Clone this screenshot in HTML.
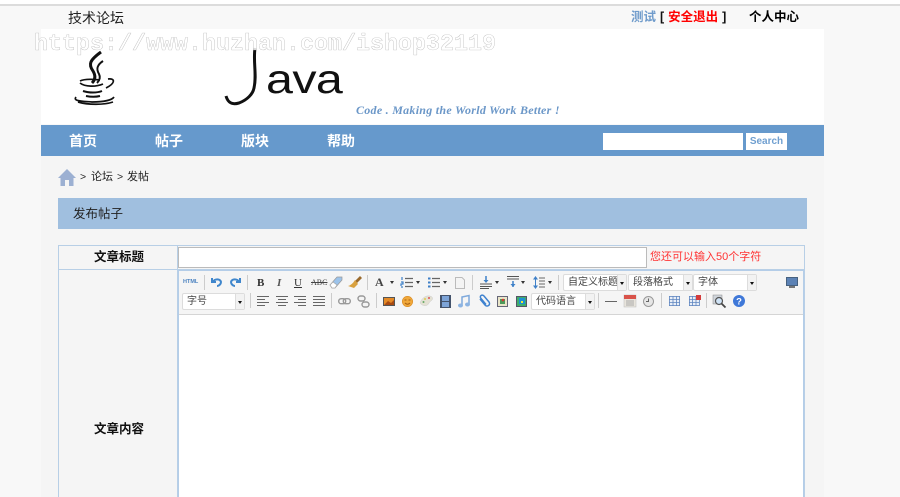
<!DOCTYPE html>
<html lang="zh-CN"><head><meta charset="utf-8"><title>发布帖子</title>
<style>
html,body{margin:0;padding:0;width:900px;height:497px;overflow:hidden;background:#f8f8f8}
body{font-family:"Liberation Sans","Noto Sans CJK SC",sans-serif;color:#111}
#w{position:absolute;left:0;top:0;width:900px;height:497px;filter:blur(.3px)}
.a{position:absolute;white-space:nowrap}
.sel{position:absolute;height:15px;background:#fff;border:1px solid #dcdcdc;border-radius:2px;box-sizing:content-box;font-size:10px;line-height:16px;color:#444;padding-left:4px;white-space:nowrap}
.sel:after{content:"";position:absolute;right:0;top:0;width:8px;height:15px;background:#f2f2f2;border-left:1px solid #ddd}
.sel:before{content:"";position:absolute;right:2px;top:7px;border:2.5px solid transparent;border-top:3px solid #111;border-bottom:0;z-index:1}
.sep{position:absolute;width:1px;height:15px;background:#ccc}
.dd{position:absolute;width:0;height:0;border:2.5px solid transparent;border-top:3px solid #333;border-bottom:0}
svg.i{position:absolute;overflow:visible}
</style></head><body><div id="w">
<div class="a" style="left:0;top:0;width:900px;height:4px;background:#fff"></div>
<div class="a" style="left:0;top:4px;width:900px;height:2px;background:#dcdcdc"></div>
<div class="a" style="left:41px;top:156px;width:783px;height:341px;background:#f5f5f5"></div>
<div class="a" style="left:68px;top:9px;font-size:14px;line-height:18px;color:#222">技术论坛</div>
<div class="a" style="left:631px;top:9px;font-size:12.500px;line-height:17px;font-weight:700;color:#111;word-spacing:.5px"><span style="color:#6f9bcb">测试</span> [ <span style="color:#f00">安全退出</span> ]</div>
<div class="a" style="left:749px;top:9px;font-size:12.500px;line-height:17px;font-weight:700;color:#000">个人中心</div>

<div class="a" style="left:41px;top:29px;width:783px;height:95px;background:#fff"></div>
<svg class="i" style="left:72px;top:50px" width="50" height="56" viewBox="0 0 50 56" fill="none" stroke="#111">
<path d="M29 2C18 10 16 14 21 21C24 26 23 30 20 33" stroke-width="3"/>
<path d="M31 11C25 15 24 19 27 24C29 28 27 31 25 33" stroke-width="2"/>
<path d="M8 31C12 29 20 29 28 30M8 33C13 37 24 37 31 34M36 29C43 28 44 33 34 38" stroke-width="1.700"/>
<path d="M11 41C17 43 25 43 30 41M14 46C19 47 24 47 28 46" stroke-width="2"/>
<path d="M4 47C1 51 8 51 20 52C32 52 40 50 42 47M6 52C16 55 32 55 41 52" stroke-width="1.700"/>
</svg>
<svg class="i" style="left:222px;top:47px" width="44" height="62" viewBox="0 0 44 62" fill="none" stroke="#111">
<path d="M33 1C31 15 35 28 32 41C31 47 25 53 17 56C10 58 6 56 4 49" stroke-width="3"/>
</svg>
<div class="a" style="left:266px;top:54px;font-family:'Liberation Sans',sans-serif;font-size:41px;line-height:50px;color:#111;transform:scaleX(1.18);transform-origin:left;letter-spacing:-.5px">ava</div>
<div class="a" style="left:356px;top:102px;font-family:'Liberation Serif',serif;font-style:italic;font-weight:700;font-size:12px;line-height:16px;color:#6b97c8;letter-spacing:.27px">Code . Making the World Work Better !</div>
<div class="a" style="left:34px;top:30px;font-family:'Liberation Mono',monospace;font-weight:700;font-size:23.330px;line-height:30px;color:rgba(255,255,255,.85);-webkit-text-stroke:.35px #b4b4b4">https://www.huzhan.com/ishop32119</div>

<div class="a" style="left:41px;top:125px;width:783px;height:31px;background:#6699cc"></div>
<div class="a" style="left:69px;top:131px;font-size:14px;line-height:20px;font-weight:700;color:#fff">首页</div>
<div class="a" style="left:155px;top:131px;font-size:14px;line-height:20px;font-weight:700;color:#fff">帖子</div>
<div class="a" style="left:241px;top:131px;font-size:14px;line-height:20px;font-weight:700;color:#fff">版块</div>
<div class="a" style="left:327px;top:131px;font-size:14px;line-height:20px;font-weight:700;color:#fff">帮助</div>
<div class="a" style="left:603px;top:133px;width:140px;height:17px;background:#fff"></div>
<div class="a" style="left:746px;top:133px;width:41px;height:17px;background:#fff;color:#6f9fd0;font-size:10px;font-weight:700;line-height:17px;text-align:center">Search</div>

<svg class="i" style="left:58px;top:169px" width="18" height="17" viewBox="0 0 18 17"><path d="M9 0L18 9H15.500V17H11V11H7V17H2.500V9H0Z" fill="#9cb0d2"/></svg>
<div class="a" style="left:80px;top:169px;font-size:10.500px;line-height:16px;color:#222">&gt;</div>
<div class="a" style="left:91px;top:169px;font-size:11px;line-height:16px;color:#222">论坛</div>
<div class="a" style="left:117px;top:169px;font-size:10.500px;line-height:16px;color:#222">&gt;</div>
<div class="a" style="left:127px;top:169px;font-size:11px;line-height:16px;color:#222">发帖</div>
<div class="a" style="left:58px;top:198px;width:749px;height:31px;background:#a0bfdf"></div>
<div class="a" style="left:73px;top:205px;font-size:12.500px;line-height:18px;color:#222">发布帖子</div>

<div class="a" style="left:58px;top:245px;width:747px;height:252px;border:1px solid #b8cfe6;border-bottom:0;box-sizing:border-box"></div>
<div class="a" style="left:58px;top:269px;width:747px;height:1px;background:#b8cfe6"></div>
<div class="a" style="left:177px;top:245px;width:1px;height:252px;background:#b8cfe6"></div>
<div class="a" style="left:59px;top:248px;width:120px;text-align:center;font-size:12.500px;line-height:18px;font-weight:700;color:#111">文章标题</div>
<div class="a" style="left:59px;top:420px;width:120px;text-align:center;font-size:12.500px;line-height:18px;font-weight:700;color:#111">文章内容</div>
<div class="a" style="left:178px;top:247px;width:469px;height:21px;background:#fff;border:1px solid #bbb;box-sizing:border-box"></div>
<div class="a" style="left:650px;top:250px;font-size:11px;line-height:15px;color:#f33">您还可以输入50个字符</div>

<div class="a" style="left:178px;top:270px;width:626px;height:227px;background:#fff;border:1px solid #b4cde8;border-bottom:0;box-sizing:border-box"></div>
<div class="a" style="left:179px;top:271px;width:624px;height:43px;background:#f5f5f5;border-bottom:1px solid #d5d5d5"></div>

<!-- row 1 -->
<div class="a" style="left:183px;top:278px;font-size:5.500px;line-height:9px;font-weight:700;color:#4b82c0">HTML</div>
<div class="sep" style="left:204px;top:275px"></div>
<svg class="i" style="left:211px;top:277px" width="11" height="10" viewBox="0 0 11 10" fill="none"><path d="M1 1V5H5M1.500 5C4 1.500 9 1.500 10 5C10 7 8 9 6 9" stroke="#3f86cc" stroke-width="2"/></svg>
<svg class="i" style="left:230px;top:277px" width="11" height="10" viewBox="0 0 11 10" fill="none"><path d="M10 1V5H6M9.500 5C7 1.500 2 1.500 1 5C1 7 3 9 5 9" stroke="#3f86cc" stroke-width="2"/></svg>
<div class="sep" style="left:247px;top:275px"></div>
<div class="a" style="left:257px;top:276px;font:700 11px/14px 'Liberation Serif',serif;color:#333">B</div>
<div class="a" style="left:277px;top:276px;font:italic 700 11px/14px 'Liberation Serif',serif;color:#555">I</div>
<div class="a" style="left:294px;top:276px;font:11px/14px 'Liberation Serif',serif;color:#333;text-decoration:underline">U</div>
<div class="a" style="left:311px;top:278px;font:8px/10px 'Liberation Serif',serif;color:#444;text-decoration:line-through">ABC</div>
<svg class="i" style="left:329px;top:276px" width="14" height="13" viewBox="0 0 14 13"><path d="M1 9L8 1H13V4L6 12H3Z" fill="#9cc3ea" stroke="#999" stroke-width=".7"/><path d="M1 9L4 6L8 9L6 12H3Z" fill="#fff" stroke="#aaa" stroke-width=".7"/></svg>
<svg class="i" style="left:348px;top:276px" width="14" height="13" viewBox="0 0 14 13"><path d="M7 5L12 0L14 2L9 7Z" fill="#9a6a2c"/><path d="M7 4L10 8L6 12L0 10Q4 9 7 4Z" fill="#d9a13f"/></svg>
<div class="sep" style="left:367px;top:275px"></div>
<div class="a" style="left:375px;top:275px;font:700 12px/15px 'Liberation Serif',serif;color:#444">A</div><div class="dd" style="left:390px;top:281px"></div>
<svg class="i" style="left:401px;top:277px" width="12" height="11" viewBox="0 0 12 11" fill="none"><path d="M4 1.500H12M4 5.500H12M4 9.500H12" stroke="#666" stroke-width="1.200"/><path d="M1 0V3M0 5H2V7H0V9M0 10H2" stroke="#3e80c8" stroke-width="1.200"/></svg><div class="dd" style="left:416px;top:281px"></div>
<svg class="i" style="left:428px;top:277px" width="12" height="11" viewBox="0 0 12 11" fill="none"><path d="M4 1.500H12M4 5.500H12M4 9.500H12" stroke="#666" stroke-width="1.200"/><path d="M0 1.500H2.500M0 5.500H2.500M0 9.500H2.500" stroke="#3e80c8" stroke-width="2"/></svg><div class="dd" style="left:443px;top:281px"></div>
<svg class="i" style="left:455px;top:277px" width="10" height="12" viewBox="0 0 10 12"><path d="M.5.500H7L9.500 3V11.500H.5Z" fill="#f4f4f4" stroke="#bbb"/></svg>
<div class="sep" style="left:472px;top:275px"></div>
<svg class="i" style="left:480px;top:276px" width="13" height="13" viewBox="0 0 13 13" fill="none"><path d="M0 8H12M0 10.500H12M0 12.500H9" stroke="#555"/><path d="M6 0V6" stroke="#3e80c8" stroke-width="1.500"/><path d="M3.500 4H8.500L6 7Z" fill="#3e80c8"/></svg><div class="dd" style="left:495px;top:281px"></div>
<svg class="i" style="left:507px;top:276px" width="12" height="12" viewBox="0 0 12 12" fill="none"><path d="M0 .5H12M0 3H12" stroke="#555"/><path d="M6 5V11" stroke="#3e80c8" stroke-width="1.500"/><path d="M3.500 8H8.500L6 11Z" fill="#3e80c8"/></svg><div class="dd" style="left:521px;top:281px"></div>
<svg class="i" style="left:533px;top:276px" width="12" height="13" viewBox="0 0 12 13" fill="none"><path d="M6 2H12M6 5H12M6 8H12M6 11H12" stroke="#666"/><path d="M2.500 1V12" stroke="#3e80c8"/><path d="M0 3.500L2.500 0L5 3.500ZM0 9.500H5L2.500 13Z" fill="#3e80c8"/></svg><div class="dd" style="left:548px;top:281px"></div>
<div class="sep" style="left:558px;top:275px"></div>
<div class="sel" style="left:563px;top:274px;width:58px">自定义标题</div>
<div class="sel" style="left:628px;top:274px;width:59px">段落格式</div>
<div class="sel" style="left:693px;top:274px;width:58px">字体</div>
<svg class="i" style="left:786px;top:277px" width="12" height="11" viewBox="0 0 12 11"><rect x=".5" y=".5" width="11" height="8" fill="#5c82b5" stroke="#47617f"/><rect x="3" y="9" width="6" height="2" fill="#777"/></svg>

<!-- row 2 -->
<div class="sel" style="left:182px;top:293px;width:57px">字号</div>
<div class="sep" style="left:250px;top:293px"></div>
<svg class="i" style="left:257px;top:296px" width="12" height="10" viewBox="0 0 12 10" fill="none" stroke="#666"><path d="M0 .5H12M0 3.500H8M0 6.500H12M0 9.500H8"/></svg>
<svg class="i" style="left:276px;top:296px" width="12" height="10" viewBox="0 0 12 10" fill="none" stroke="#666"><path d="M0 .5H12M2 3.500H10M0 6.500H12M2 9.500H10"/></svg>
<svg class="i" style="left:294px;top:296px" width="12" height="10" viewBox="0 0 12 10" fill="none" stroke="#666"><path d="M0 .5H12M4 3.500H12M0 6.500H12M4 9.500H12"/></svg>
<svg class="i" style="left:313px;top:296px" width="12" height="10" viewBox="0 0 12 10" fill="none" stroke="#666"><path d="M0 .5H12M0 3.500H12M0 6.500H12M0 9.500H12"/></svg>
<div class="sep" style="left:331px;top:293px"></div>
<svg class="i" style="left:338px;top:298px" width="13" height="7" viewBox="0 0 13 7" fill="none" stroke="#999" stroke-width="1.400"><rect x=".7" y=".7" width="7" height="5" rx="2.500"/><rect x="5.300" y=".7" width="7" height="5" rx="2.500"/></svg>
<svg class="i" style="left:357px;top:295px" width="13" height="13" viewBox="0 0 13 13" fill="none" stroke="#999" stroke-width="1.400"><rect x="1" y="1" width="7" height="5" rx="2.500"/><rect x="5" y="7" width="7" height="5" rx="2.500"/></svg>
<div class="sep" style="left:376px;top:293px"></div>
<svg class="i" style="left:383px;top:297px" width="12" height="9" viewBox="0 0 12 9"><rect width="12" height="9" fill="#555"/><rect x="1" y="1" width="10" height="7" fill="#e58a26"/><path d="M1 8L5 4L8 6L11 3V8Z" fill="#a84a12"/></svg>
<svg class="i" style="left:402px;top:296px" width="11" height="11" viewBox="0 0 11 11"><circle cx="5.500" cy="5.500" r="5.200" fill="#f0a83a" stroke="#d98a20" stroke-width=".6"/><path d="M2.500 4H4.500M6.500 4H8.500M3 7Q5.500 9.500 8 7" stroke="#a85f10" fill="none"/></svg>
<svg class="i" style="left:420px;top:295px" width="13" height="12" viewBox="0 0 13 12"><path d="M0 8C2 2 8-1 12 2C14 5 10 6 9 8C8 11 3 12 0 8Z" fill="#e4e1d3" stroke="#ccc" stroke-width=".5"/><circle cx="9" cy="3" r="1" fill="#d55"/><circle cx="5" cy="4" r="1" fill="#dc5"/><circle cx="3.500" cy="7" r="1" fill="#6a6"/></svg>
<svg class="i" style="left:440px;top:295px" width="11" height="13" viewBox="0 0 11 13"><rect width="11" height="13" fill="#44536b"/><rect x="2" y="1" width="7" height="5" fill="#7da4d8"/><rect x="2" y="7" width="7" height="5" fill="#7da4d8"/></svg>
<svg class="i" style="left:458px;top:295px" width="12" height="13" viewBox="0 0 12 13" fill="none"><path d="M4 10V2L11 .5V9" stroke="#7ea9dc" stroke-width="1.500"/><ellipse cx="2.500" cy="10.500" rx="2.500" ry="2" fill="#8db4e2"/><ellipse cx="9.500" cy="9.500" rx="2.500" ry="2" fill="#8db4e2"/></svg>
<svg class="i" style="left:478px;top:294px" width="13" height="14" viewBox="0 0 13 14" fill="none"><path d="M2 5L7 11C9 13.500 13 11 11 8L6 2C4 0 1 2 3 4.500L8 10.500" stroke="#3f82cf" stroke-width="1.500"/></svg>
<svg class="i" style="left:497px;top:296px" width="11" height="11" viewBox="0 0 11 11"><rect x=".5" y=".5" width="10" height="10" fill="#e9e5c8" stroke="#667"/><rect x="3" y="3" width="5" height="5" fill="#4d9a5a"/><circle cx="6" cy="4" r="1.300" fill="#d33"/></svg>
<svg class="i" style="left:516px;top:296px" width="11" height="11" viewBox="0 0 11 11"><rect x=".5" y=".5" width="10" height="10" fill="#3fae6c" stroke="#556"/><rect x="3" y="2" width="6" height="6" fill="#1e90d5"/><rect x="5" y="5" width="2" height="2" fill="#ee3"/></svg>
<div class="sel" style="left:531px;top:293px;width:58px">代码语言</div>
<div class="sep" style="left:598px;top:293px"></div>
<div class="a" style="left:605px;top:301px;width:12px;height:1px;background:#666"></div>
<svg class="i" style="left:624px;top:295px" width="12" height="12" viewBox="0 0 12 12"><rect width="12" height="12" fill="#e8e4dc" stroke="#bbb" stroke-width=".5"/><rect width="12" height="4" fill="#d9534a"/><path d="M2 6H10M2 8H10M2 10H10" stroke="#aaa"/></svg>
<svg class="i" style="left:643px;top:296px" width="11" height="11" viewBox="0 0 11 11" fill="none"><circle cx="5.500" cy="5.500" r="5" fill="#e6e6e6" stroke="#999"/><path d="M5.500 2.500V5.500H3" stroke="#666"/></svg>
<div class="sep" style="left:661px;top:293px"></div>
<svg class="i" style="left:669px;top:296px" width="11" height="10" viewBox="0 0 11 10" fill="#e8eef7" stroke="#5f86c0" stroke-width=".8"><rect x=".4" y=".4" width="10.200" height="9.200"/><path d="M.4 3.500H10.600M.4 6.500H10.600M4 .4V9.600M7.500 .4V9.600" fill="none"/></svg>
<svg class="i" style="left:689px;top:295px" width="12" height="11" viewBox="0 0 12 11" fill="#e8eef7" stroke="#5f86c0" stroke-width=".8"><rect x=".4" y="1.400" width="10" height="9.200"/><path d="M.4 4.500H10.400M.4 7.500H10.400M3.500 1.400V10.600M7 1.400V10.600" fill="none"/><rect x="7" y="0" width="5" height="5" fill="#d43c3c" stroke="none"/></svg>
<div class="sep" style="left:706px;top:293px"></div>
<svg class="i" style="left:713px;top:295px" width="13" height="13" viewBox="0 0 13 13" fill="none"><rect x="0" y="0" width="9" height="9" fill="#cfd4da" stroke="#888" stroke-width=".5"/><circle cx="6" cy="6" r="3.500" fill="#cfe3f6" stroke="#555" stroke-width="1.200"/><path d="M8.500 8.500L12.500 12.500" stroke="#444" stroke-width="1.800"/></svg>
<svg class="i" style="left:733px;top:295px" width="12" height="12" viewBox="0 0 12 12"><circle cx="6" cy="6" r="6" fill="#3f78d8"/><text x="6" y="9.500" text-anchor="middle" font-family="Liberation Sans" font-weight="700" font-size="9.500" fill="#fff">?</text></svg>
</div></body></html>
